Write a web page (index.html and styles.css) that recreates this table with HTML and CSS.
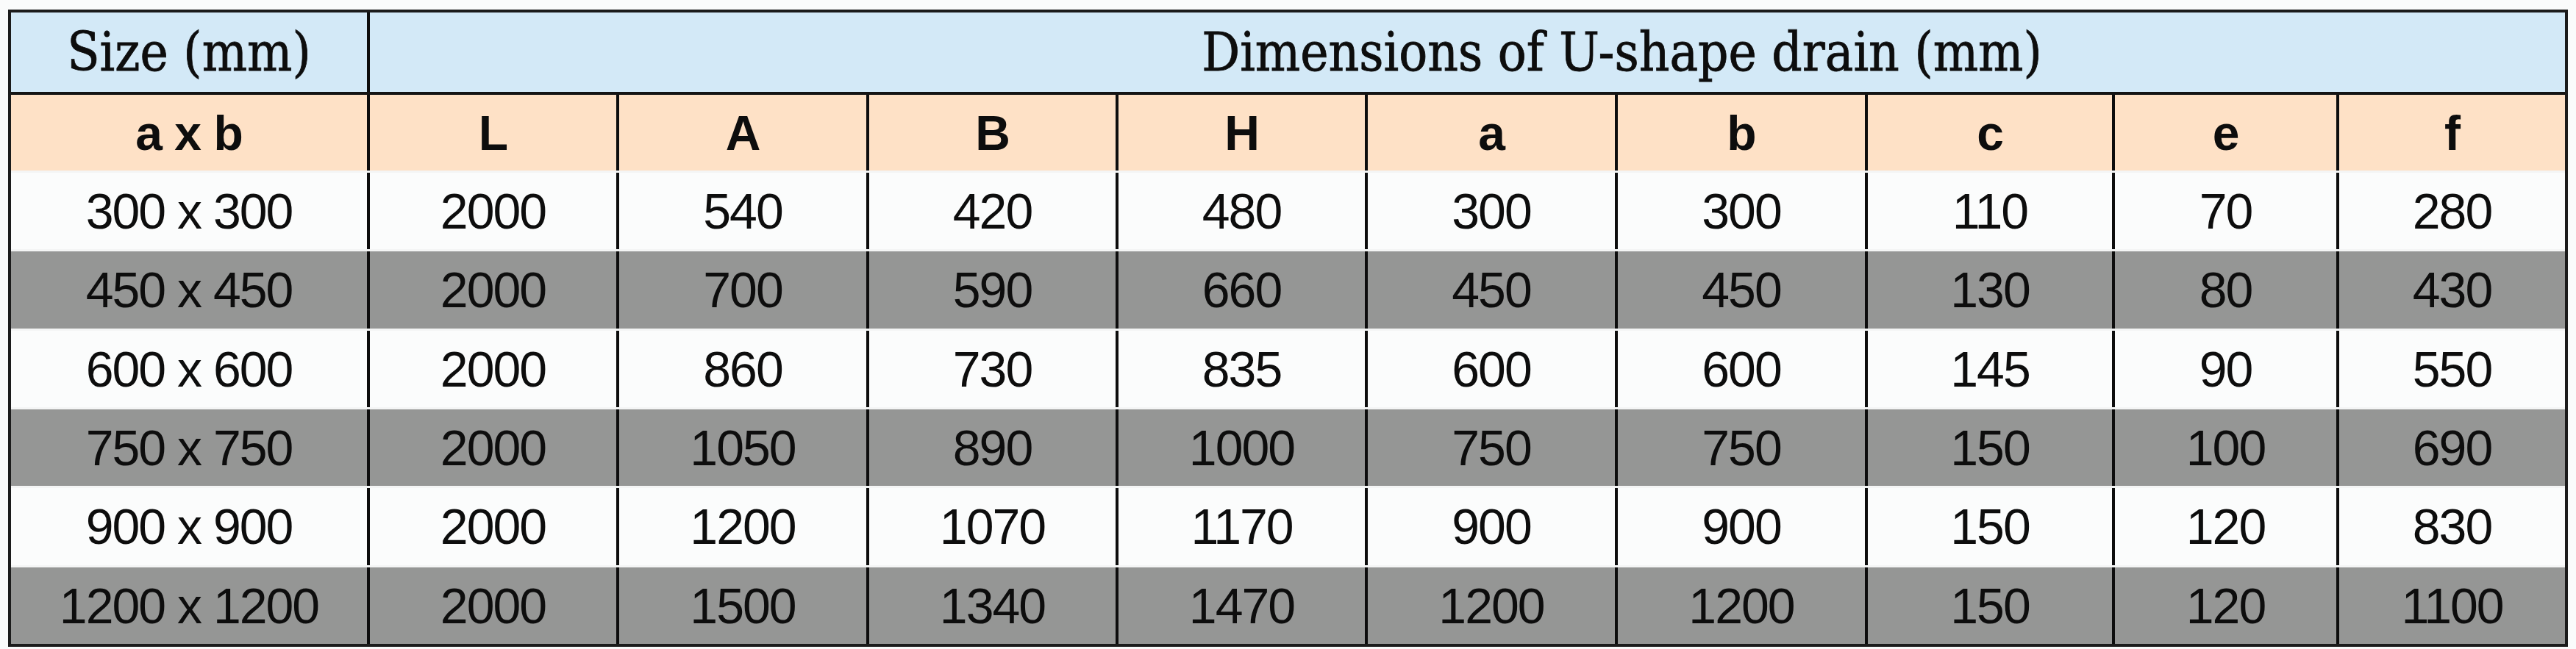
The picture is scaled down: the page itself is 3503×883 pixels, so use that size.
FILE: index.html
```html
<!DOCTYPE html>
<html lang="en">
<head>
<meta charset="utf-8">
<title>U-shape drain dimensions</title>
<link rel="stylesheet" href="styles.css">
</head>
<body>
<div class="sheet">
  <div class="table">
    <div class="row head1">
      <div class="cell size">Size (mm)</div>
      <div class="cell dims">Dimensions of U-shape drain (mm)</div>
    </div>
    <div class="row head2">
      <div class="cell">a x b</div>
      <div class="cell">L</div>
      <div class="cell">A</div>
      <div class="cell">B</div>
      <div class="cell">H</div>
      <div class="cell">a</div>
      <div class="cell">b</div>
      <div class="cell">c</div>
      <div class="cell">e</div>
      <div class="cell">f</div>
    </div>
    <div class="body">
      <div class="row data light">
        <div class="cell">300 x 300</div><div class="cell">2000</div><div class="cell">540</div><div class="cell">420</div><div class="cell">480</div><div class="cell">300</div><div class="cell">300</div><div class="cell">110</div><div class="cell">70</div><div class="cell">280</div>
      </div>
      <div class="row data dark">
        <div class="cell">450 x 450</div><div class="cell">2000</div><div class="cell">700</div><div class="cell">590</div><div class="cell">660</div><div class="cell">450</div><div class="cell">450</div><div class="cell">130</div><div class="cell">80</div><div class="cell">430</div>
      </div>
      <div class="row data light">
        <div class="cell">600 x 600</div><div class="cell">2000</div><div class="cell">860</div><div class="cell">730</div><div class="cell">835</div><div class="cell">600</div><div class="cell">600</div><div class="cell">145</div><div class="cell">90</div><div class="cell">550</div>
      </div>
      <div class="row data dark">
        <div class="cell">750 x 750</div><div class="cell">2000</div><div class="cell">1050</div><div class="cell">890</div><div class="cell">1000</div><div class="cell">750</div><div class="cell">750</div><div class="cell">150</div><div class="cell">100</div><div class="cell">690</div>
      </div>
      <div class="row data light">
        <div class="cell">900 x 900</div><div class="cell">2000</div><div class="cell">1200</div><div class="cell">1070</div><div class="cell">1170</div><div class="cell">900</div><div class="cell">900</div><div class="cell">150</div><div class="cell">120</div><div class="cell">830</div>
      </div>
      <div class="row data dark">
        <div class="cell">1200 x 1200</div><div class="cell">2000</div><div class="cell">1500</div><div class="cell">1340</div><div class="cell">1470</div><div class="cell">1200</div><div class="cell">1200</div><div class="cell">150</div><div class="cell">120</div><div class="cell">1100</div>
      </div>
    </div>
  </div>
</div>
</body>
</html>
```

FILE: styles.css
```css
html, body {
  margin: 0;
  padding: 0;
  background: #fafbfb;
}

.sheet {
  padding: 13px 0 0 11px;
}

.table {
  width: 3473px;
  border: 4px solid #1b1b1b;
  background: #f4f5f5;
  color: #0d0d0d;
}

.row {
  display: grid;
  grid-template-columns: 484px 339px 340px 339px 339px 340px 340px 336px 305px 311px;
}

.cell {
  display: flex;
  align-items: center;
  justify-content: center;
  box-sizing: border-box;
  white-space: nowrap;
}

.row .cell + .cell {
  border-left: 4px solid #0d0d0d;
}

/* first header row */
.head1 {
  height: 108px;
  background: #d3e9f7;
  border-bottom: 4px solid #141414;
  font-family: "DejaVu Serif Condensed", "DejaVu Serif", serif;
  font-stretch: condensed;
  font-size: 72px;
  -webkit-text-stroke: 0.8px #0d0d0d;
}

.head1 .dims {
  grid-column: 2 / -1;
  padding-left: 420px;
}

/* second header row */
.head2 {
  height: 103px;
  background: #fee1c6;
  font-family: "Liberation Sans", Arial, sans-serif;
  font-weight: bold;
  font-size: 66px;
  letter-spacing: -1px;
}

/* body */
.body {
  display: grid;
  grid-auto-rows: 1fr;
  row-gap: 3px;
  padding-top: 3px;
  height: 644px;
  box-sizing: border-box;
}

.data {
  font-family: "Liberation Sans", Arial, sans-serif;
  font-size: 68px;
  letter-spacing: -2px;
}

.light {
  background: #fbfcfc;
}

.dark {
  background: #959695;
}
```
